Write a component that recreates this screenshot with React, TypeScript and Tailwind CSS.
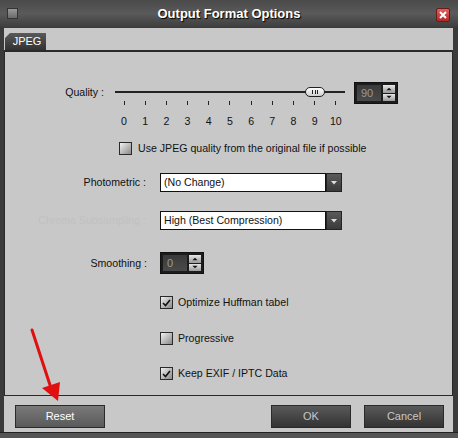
import React from 'react'

const FONT = { fontFamily: '"Liberation Sans", Arial, sans-serif' }

function Check({ checked }: { checked?: boolean }) {
  return (
    <span className="flex h-[13px] w-[13px] shrink-0 items-center justify-center border border-[#2a2a2a] bg-gradient-to-br from-[#f2f2f2] to-[#8a8a8a]">
      {checked && (
        <svg width="9" height="8" viewBox="0 0 9 8">
          <path d="M1 4 L3.5 6.5 L8 1" fill="none" stroke="#111" strokeWidth="1.6" />
        </svg>
      )}
    </span>
  )
}

function Spin({ value, w, h }: { value: string; w: number; h: number }) {
  return (
    <div className="flex border border-[#111] bg-[#1c1c1c] p-[2px]" style={{ width: w, height: h }}>
      <div className="flex flex-1 items-center bg-gradient-to-b from-[#3a3a3a] to-[#4a4a4a] pl-[4px] text-[11px] text-[#9a9a9a]">
        {value}
      </div>
      <div className="ml-[2px] flex w-[12px] flex-col gap-[1px]">
        {['M1 5 L4 2 L7 5', 'M1 2 L4 5 L7 2'].map((d) => (
          <span key={d} className="flex flex-1 items-center justify-center bg-gradient-to-b from-[#e8e8e8] to-[#9a9a9a]">
            <svg width="8" height="6" viewBox="0 0 8 7">
              <path d={d} fill="#111" />
            </svg>
          </span>
        ))}
      </div>
    </div>
  )
}

function Dropdown({ value }: { value: string }) {
  return (
    <div className="flex h-[19px] w-[182px]">
      <div className="flex flex-1 items-center border border-[#111] bg-white pl-[3px] text-[#111]">{value}</div>
      <div className="flex w-[16px] items-center justify-center border border-[#222] bg-gradient-to-b from-[#5a5a5a] to-[#3a3a3a]">
        <svg width="6" height="4" viewBox="0 0 6 4">
          <path d="M0 0 L6 0 L3 3.5 Z" fill="#ddd" />
        </svg>
      </div>
    </div>
  )
}

function Btn({ label, light, dim }: { label: string; light?: boolean; dim?: boolean }) {
  return (
    <div
      className={`flex h-[23px] items-center justify-center border border-[#2a2a2a] text-[11px] ${
        light ? 'bg-gradient-to-b from-[#7a7a7a] to-[#5a5a5a] text-white' : 'bg-gradient-to-b from-[#5a5a5a] to-[#333] text-[#c8c8c8]'
      } ${dim ? 'text-[#9a9a9a]' : ''}`}
    >
      {label}
    </div>
  )
}

export default function App() {
  const ticks = Array.from({ length: 11 }, (_, i) => i)
  return (
    <div className="relative flex h-[438px] w-[458px] flex-col bg-[#3a3a3a] text-[10.6px] leading-[13px] text-[#111]" style={FONT}>
      {/* title bar */}
      <div className="relative flex h-[27px] items-center justify-center bg-gradient-to-b from-[#4a4a4a] via-[#5a5a5a] to-[#3e3e3e]">
        <span className="absolute left-[7px] top-[8px] h-[11px] w-[11px] border border-[#333] bg-gradient-to-b from-[#9a9a9a] to-[#6a6a6a]" />
        <span className="text-[13px] font-bold text-white [text-shadow:1px_1px_1px_#000]">Output Format Options</span>
        <span className="absolute left-[436px] top-[8px] flex h-[14px] w-[14px] items-center justify-center rounded-[2px] border border-[#6a1a1a] bg-gradient-to-b from-[#e06060] to-[#b02828]">
          <svg width="8" height="8" viewBox="0 0 8 8">
            <path d="M1 1 L7 7 M7 1 L1 7" stroke="#fff" strokeWidth="2" />
          </svg>
        </span>
      </div>

      {/* body */}
      <div className="ml-[4px] mr-[5px] mt-[1px] flex flex-1 flex-col bg-[#c8c8c8]">
        <div className="flex h-[22px] items-end pl-[1px]">
          <div className="flex h-[17px] w-[41px] items-center justify-center bg-gradient-to-b from-[#5a5a5a] to-[#333] pl-[3px] text-[11px] text-white [clip-path:polygon(5px_0,100%_0,100%_100%,0_100%,0_5px)]">
            JPEG
          </div>
        </div>

        {/* panel */}
        <div className="flex h-[346px] flex-col border-x border-b border-t-2 border-[#2a2a2a]">
          {/* quality */}
          <div className="mt-[31px] flex items-start">
            <div className="h-[18px] w-[100px] pr-[1px] text-right leading-[18px]">Quality :</div>
            <div className="ml-[10px] w-[230px]">
              <div className="relative h-[18px]">
                <div className="absolute left-0 right-0 top-[8px] h-[2px] bg-[#222]" />
                <div className="absolute left-[190px] top-[4px] flex h-[10px] w-[20px] items-center justify-center gap-[1.5px] rounded-full border border-[#222] bg-gradient-to-b from-white to-[#cfcfcf]">
                  <span className="h-[4px] w-[1px] bg-[#222]" />
                  <span className="h-[4px] w-[1px] bg-[#222]" />
                  <span className="h-[4px] w-[1px] bg-[#222]" />
                </div>
              </div>
              <div className="flex h-[4px] justify-between px-[3px]">
                {ticks.map((t) => (
                  <span key={t} className="flex w-[12px] justify-center">
                    <span className="h-[4px] w-[1px] bg-[#222]" />
                  </span>
                ))}
              </div>
              <div className="mt-[9px] flex h-[14px] justify-between px-[3px] leading-[14px]">
                {ticks.map((t) => (
                  <span key={t} className="flex w-[12px] justify-center">
                    {t}
                  </span>
                ))}
              </div>
            </div>
            <div className="ml-[9px] mt-[-1px]">
              <Spin value="90" w={44} h={22} />
            </div>
          </div>

          <div className="ml-[114px] mt-[14px] flex h-[13px] items-center gap-[6px]">
            <Check />
            <span>Use JPEG quality from the original file if possible</span>
          </div>

          <div className="mt-[18px] flex h-[19px] items-center">
            <div className="w-[141px] text-right">Photometric :</div>
            <div className="ml-[14px]">
              <Dropdown value="(No Change)" />
            </div>
          </div>

          <div className="mt-[19px] flex h-[19px] items-center">
            <div className="w-[141px] text-right text-[#c1c1c1]">Chroma Subsampling :</div>
            <div className="ml-[14px]">
              <Dropdown value="High (Best Compression)" />
            </div>
          </div>

          <div className="mt-[22px] flex h-[22px] items-center">
            <div className="w-[142px] text-right">Smoothing :</div>
            <div className="ml-[13px]">
              <Spin value="0" w={44} h={22} />
            </div>
          </div>

          {[
            ['Optimize Huffman tabel', true, 22],
            ['Progressive', false, 23],
            ['Keep EXIF / IPTC Data', true, 22],
          ].map(([label, checked, mt]) => (
            <div key={label as string} className="ml-[155px] flex h-[13px] items-center gap-[5px]" style={{ marginTop: mt as number }}>
              <Check checked={checked as boolean} />
              <span>{label as string}</span>
            </div>
          ))}
        </div>

        {/* footer */}
        <div className="flex flex-1 items-start pt-[9px]">
          <div className="ml-[11px] w-[90px]">
            <Btn label="Reset" light />
          </div>
          <div className="ml-[166px] w-[80px]">
            <Btn label="OK" dim />
          </div>
          <div className="ml-[13px] w-[80px]">
            <Btn label="Cancel" />
          </div>
        </div>
      </div>
      <div className="h-[6px] border-t border-[#222] bg-[#555]" />

      {/* red annotation arrow */}
      <svg className="pointer-events-none absolute left-0 top-0" width="458" height="438">
        <line x1="32" y1="330" x2="50" y2="385" stroke="#e01010" strokeWidth="3" strokeLinecap="round" />
        <path d="M42 388 L60 382 L58 401 Z" fill="#e01010" />
      </svg>
    </div>
  )
}
